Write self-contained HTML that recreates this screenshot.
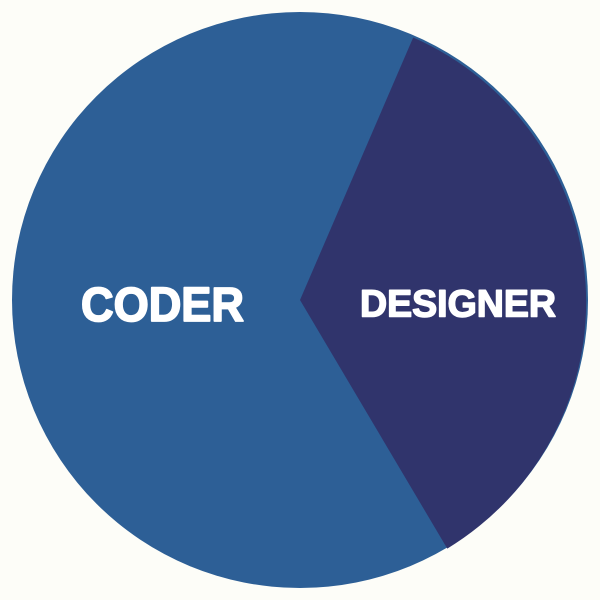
<!DOCTYPE html>
<html><head><style>html,body{margin:0;padding:0;background:#fdfdf8;}svg{display:block}</style></head>
<body>
<svg width="600" height="600" viewBox="0 0 600 600">
<rect width="600" height="600" fill="#fdfdf8"/>
<circle cx="300" cy="300" r="288" fill="#2d5f96"/>
<path d="M300 300 L413.2 37.5 A288.6 288.6 0 0 1 447.3 548.6 Z" fill="#30346c"/>
<text x="81" y="321" font-family="Liberation Sans, sans-serif" font-weight="bold" font-size="48" fill="#fff" stroke="#fff" stroke-width="1.8" stroke-linejoin="round" textLength="163" lengthAdjust="spacingAndGlyphs">CODER</text>
<text x="360" y="316.5" font-family="Liberation Sans, sans-serif" font-weight="bold" font-size="38" fill="#fff" stroke="#fff" stroke-width="1.5" stroke-linejoin="round" textLength="196" lengthAdjust="spacingAndGlyphs">DESIGNER</text>
</svg>
</body></html>
